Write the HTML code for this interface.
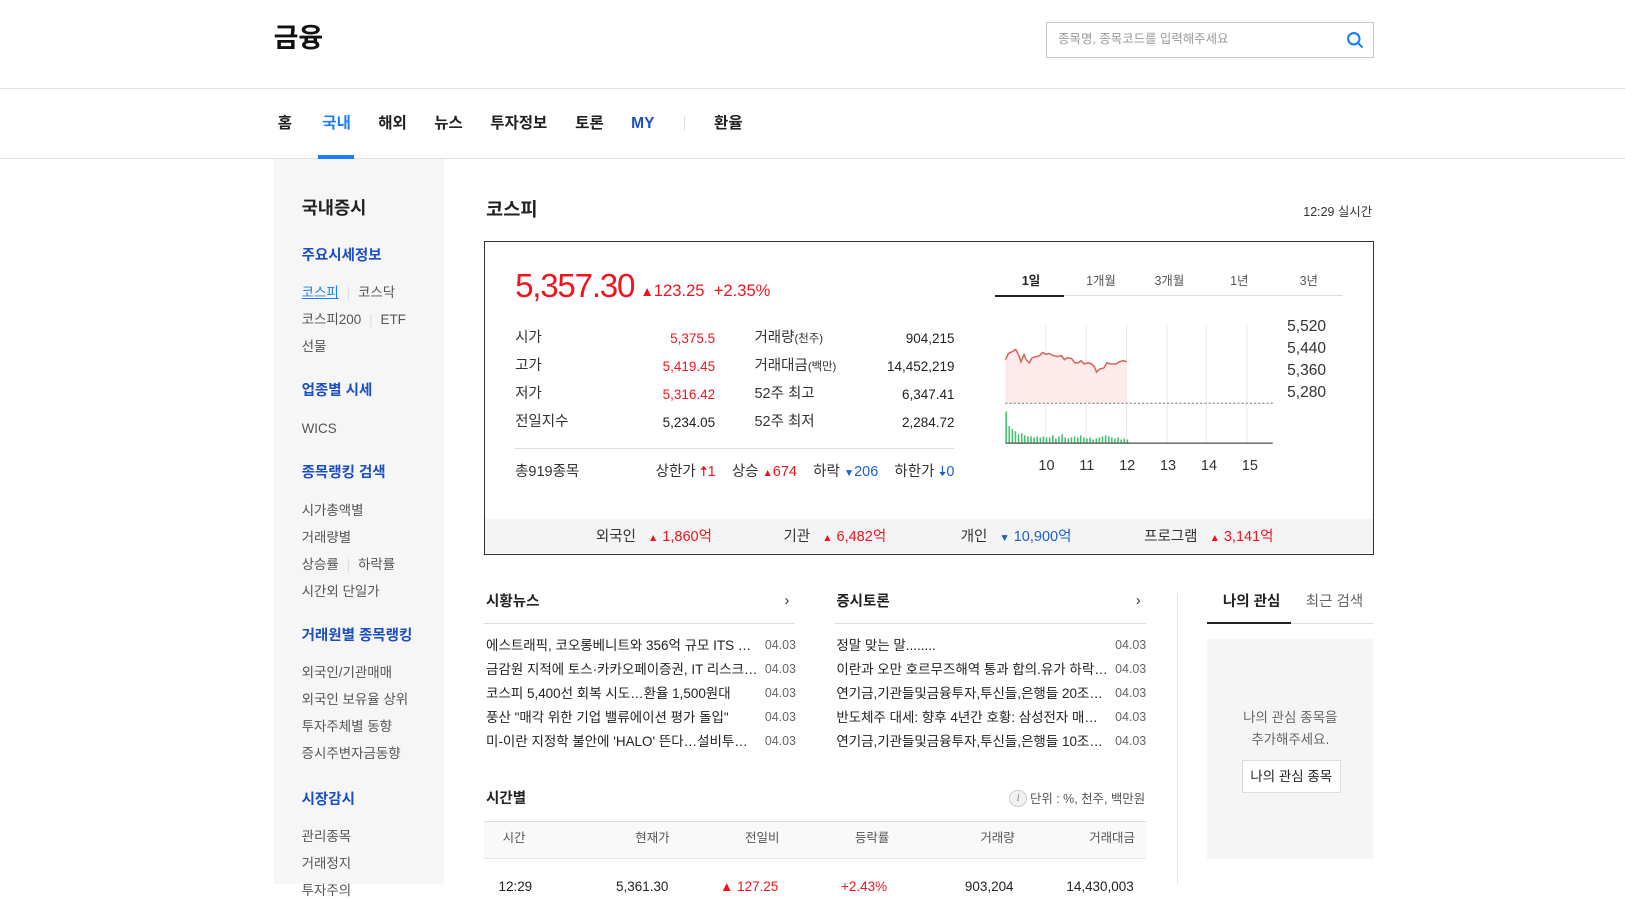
<!DOCTYPE html>
<html><head><meta charset="utf-8">
<style>
html{zoom:1.03635}
body{margin:0;width:1568px;height:853px;overflow:hidden;background:#fff;font-family:"Liberation Sans","Noto Sans CJK KR",sans-serif;color:#222;position:relative}
.a{position:absolute;white-space:nowrap;line-height:1}
.sb{font-size:13px;color:#555}
.nv{font-size:15px;font-weight:bold;top:112px}
.l{font-size:14px;color:#333}
.n{font-size:13px;color:#222}
.r{color:#f0141e!important}.b{color:#1a4fc4}
</style></head><body>
<div class="a" style="left:264px;top:24px;font-size:26px;font-weight:bold;color:#111">금융</div>
<div class="a" style="left:1009px;top:21px;width:315px;height:33px;border:1px solid #c8c8c8"></div>
<div class="a" style="left:1021px;top:32px;font-size:12px;color:#999">종목명, 종목코드를 입력해주세요</div>
<svg class="a" style="left:1299px;top:30px" width="18" height="18" viewBox="0 0 18 18"><circle cx="7.5" cy="7.5" r="5.5" fill="none" stroke="#1a7cff" stroke-width="2"/><path d="M11.5 11.5L16 16" stroke="#1a7cff" stroke-width="2"/></svg>
<div class="a" style="left:0;top:85px;width:1568px;height:1px;background:#e2e2e2"></div>
<div class="a nv" style="left:268px">홈</div>
<div class="a nv" style="left:311px;color:#1a7cff">국내</div>
<div class="a nv" style="left:365px">해외</div>
<div class="a nv" style="left:419px">뉴스</div>
<div class="a nv" style="left:473px">투자정보</div>
<div class="a nv" style="left:555px">토론</div>
<div class="a nv" style="left:609px;color:#1f4fc4">MY</div>
<div class="a" style="left:660px;top:112px;width:1px;height:14px;background:#ddd"></div>
<div class="a nv" style="left:689px">환율</div>
<div class="a" style="left:0;top:152px;width:1568px;height:1px;background:#e2e2e2"></div>
<div class="a" style="left:307px;top:150px;width:35px;height:3px;background:#1a7cff"></div>
<div class="a" style="left:264px;top:153px;width:164px;height:700px;background:#f6f6f6"></div>
<div class="a" style="left:291px;top:193px;font-size:17px;font-weight:bold;color:#222">국내증시</div>
<div class="a b" style="left:291px;top:240px;font-size:14px;font-weight:bold">주요시세정보</div>
<div class="a sb" style="left:291px;top:276px"><span style="color:#1a7cff;text-decoration:underline">코스피</span> <span style="color:#ddd;margin:0 4px">|</span> 코스닥</div>
<div class="a sb" style="left:291px;top:302px">코스피200 <span style="color:#ddd;margin:0 4px">|</span> ETF</div>
<div class="a sb" style="left:291px;top:328px">선물</div>
<div class="a b" style="left:291px;top:371px;font-size:14px;font-weight:bold">업종별 시세</div>
<div class="a sb" style="left:291px;top:407px">WICS</div>
<div class="a b" style="left:291px;top:450px;font-size:14px;font-weight:bold">종목랭킹 검색</div>
<div class="a sb" style="left:291px;top:486px">시가총액별</div>
<div class="a sb" style="left:291px;top:512px">거래량별</div>
<div class="a sb" style="left:291px;top:538px">상승률 <span style="color:#ddd;margin:0 4px">|</span> 하락률</div>
<div class="a sb" style="left:291px;top:564px">시간외 단일가</div>
<div class="a b" style="left:291px;top:607px;font-size:14px;font-weight:bold">거래원별 종목랭킹</div>
<div class="a sb" style="left:291px;top:643px">외국인/기관매매</div>
<div class="a sb" style="left:291px;top:669px">외국인 보유율 상위</div>
<div class="a sb" style="left:291px;top:695px">투자주체별 동향</div>
<div class="a sb" style="left:291px;top:721px">증시주변자금동향</div>
<div class="a b" style="left:291px;top:765px;font-size:14px;font-weight:bold">시장감시</div>
<div class="a sb" style="left:291px;top:801px">관리종목</div>
<div class="a sb" style="left:291px;top:827px">거래정지</div>
<div class="a sb" style="left:291px;top:853px">투자주의</div>

<div class="a" style="left:469px;top:194px;font-size:18px;font-weight:bold">코스피</div>
<div class="a" style="right:244px;top:199px;font-size:12px;color:#333">12:29 실시간</div>
<div class="a" style="left:467px;top:233px;width:857px;height:301px;border:1px solid #333"></div>
<div class="a" style="left:468px;top:501px;width:857px;height:33px;background:#f4f4f4"></div>
<div class="a r" style="left:497px;top:261px;font-size:32px;letter-spacing:-1.2px">5,357.30</div>
<div class="a r" style="left:618px;top:273px;font-size:16px"><span style="font-size:13px">▲</span>123.25 &nbsp;+2.35%</div>
<div class="a l" style="left:497px;top:319px">시가</div><div class="a n r" style="right:878px;top:320px">5,375.5</div>
<div class="a l" style="left:497px;top:346px">고가</div><div class="a n r" style="right:878px;top:347px">5,419.45</div>
<div class="a l" style="left:497px;top:373px">저가</div><div class="a n r" style="right:878px;top:374px">5,316.42</div>
<div class="a l" style="left:497px;top:400px">전일지수</div><div class="a n" style="right:878px;top:401px">5,234.05</div>
<div class="a l" style="left:728px;top:319px">거래량<span style="font-size:11px">(천주)</span></div><div class="a n" style="right:647px;top:320px">904,215</div>
<div class="a l" style="left:728px;top:346px">거래대금<span style="font-size:11px">(백만)</span></div><div class="a n" style="right:647px;top:347px">14,452,219</div>
<div class="a l" style="left:728px;top:373px">52주 최고</div><div class="a n" style="right:647px;top:374px">6,347.41</div>
<div class="a l" style="left:728px;top:400px">52주 최저</div><div class="a n" style="right:647px;top:401px">2,284.72</div>
<div class="a" style="left:497px;top:432px;width:424px;height:1px;background:#ddd"></div>
<div class="a l" style="left:497px;top:449px">총919종목</div>
<div class="a l" style="right:647px;top:449px;font-size:14px">상한가 <span class="r">🠅1</span> &nbsp;&nbsp; 상승 <span class="r"><span style="font-size:10px">▲</span>674</span> &nbsp;&nbsp; 하락 <span style="color:#1a5fd0"><span style="font-size:10px">▼</span>206</span> &nbsp;&nbsp; 하한가 <span style="color:#1a5fd0">🠇0</span></div>
<div class="a l" style="left:575px;top:511px">외국인 &nbsp; <span class="r"><span style="font-size:10px">▲</span> 1,860억</span></div>
<div class="a l" style="left:756px;top:511px">기관 &nbsp; <span class="r"><span style="font-size:10px">▲</span> 6,482억</span></div>
<div class="a l" style="left:927px;top:511px">개인 &nbsp; <span style="color:#1a5fd0"><span style="font-size:10px">▼</span> 10,900억</span></div>
<div class="a l" style="left:1104px;top:511px">프로그램 &nbsp; <span class="r"><span style="font-size:10px">▲</span> 3,141억</span></div>

<div class="a" style="left:960px;top:285px;width:336px;height:1px;background:#ddd"></div>
<div class="a" style="left:960px;top:285px;width:67px;height:2px;background:#222"></div>
<div class="a" style="left:986px;top:265px;font-size:12px;font-weight:bold">1일</div>
<div class="a" style="left:1048px;top:265px;font-size:12px;color:#555">1개월</div>
<div class="a" style="left:1114px;top:265px;font-size:12px;color:#555">3개월</div>
<div class="a" style="left:1187px;top:265px;font-size:12px;color:#555">1년</div>
<div class="a" style="left:1254px;top:265px;font-size:12px;color:#555">3년</div>
<svg class="a" style="left:960px;top:300px" width="280" height="140" viewBox="960 300 280 140">
<g stroke="#eaeaea"><line x1="1009" y1="313" x2="1009" y2="427"/><line x1="1048" y1="313" x2="1048" y2="427"/><line x1="1087" y1="313" x2="1087" y2="427"/><line x1="1126" y1="313" x2="1126" y2="427"/><line x1="1164" y1="313" x2="1164" y2="427"/><line x1="1203" y1="313" x2="1203" y2="427"/></g>
<path d="M970 389L970 347 973 341 977 339 980 337 983 343 985 349 988 342 990 347 993 350 996 345 1000 344 1003 343 1006 340 1009 342 1012 341 1016 343 1020 344 1024 343 1027 347 1030 345 1034 346 1037 350 1040 350 1043 348 1046 351 1050 350 1053 351 1056 354 1058 359 1061 356 1065 355 1068 350 1071 351 1074 351 1077 351 1080 349 1084 348 1087 349 1087 389Z" fill="#fdeaea"/>
<polyline points="970,347 973,341 977,339 980,337 983,343 985,349 988,342 990,347 993,350 996,345 1000,344 1003,343 1006,340 1009,342 1012,341 1016,343 1020,344 1024,343 1027,347 1030,345 1034,346 1037,350 1040,350 1043,348 1046,351 1050,350 1053,351 1056,354 1058,359 1061,356 1065,355 1068,350 1071,351 1074,351 1077,351 1080,349 1084,348 1087,349" fill="none" stroke="#d9655e" stroke-width="1.5"/>
<line x1="970" y1="389" x2="1228" y2="389" stroke="#777" stroke-dasharray="2,2"/>
<g fill="#3bc36a"><rect x="970" y="397" width="1.5" height="30"/><rect x="973" y="411" width="1.5" height="16"/><rect x="976" y="414" width="1.5" height="13"/><rect x="979" y="416" width="1.5" height="11"/><rect x="982" y="419" width="1.5" height="8"/><rect x="985" y="418" width="1.5" height="9"/><rect x="988" y="420" width="1.5" height="7"/><rect x="991" y="421" width="1.5" height="6"/><rect x="994" y="421" width="1.5" height="6"/><rect x="997" y="422" width="1.5" height="5"/><rect x="1000" y="421" width="1.5" height="6"/><rect x="1003" y="422" width="1.5" height="5"/><rect x="1006" y="421" width="1.5" height="6"/><rect x="1009" y="422" width="1.5" height="5"/><rect x="1012" y="422" width="1.5" height="5"/><rect x="1015" y="420" width="1.5" height="7"/><rect x="1018" y="423" width="1.5" height="4"/><rect x="1021" y="421" width="1.5" height="6"/><rect x="1024" y="419" width="1.5" height="8"/><rect x="1027" y="422" width="1.5" height="5"/><rect x="1030" y="423" width="1.5" height="4"/><rect x="1033" y="422" width="1.5" height="5"/><rect x="1036" y="421" width="1.5" height="6"/><rect x="1039" y="422" width="1.5" height="5"/><rect x="1042" y="420" width="1.5" height="7"/><rect x="1045" y="422" width="1.5" height="5"/><rect x="1048" y="423" width="1.5" height="4"/><rect x="1051" y="422" width="1.5" height="5"/><rect x="1054" y="424" width="1.5" height="3"/><rect x="1057" y="423" width="1.5" height="4"/><rect x="1060" y="422" width="1.5" height="5"/><rect x="1063" y="421" width="1.5" height="6"/><rect x="1066" y="420" width="1.5" height="7"/><rect x="1069" y="421" width="1.5" height="6"/><rect x="1072" y="422" width="1.5" height="5"/><rect x="1075" y="423" width="1.5" height="4"/><rect x="1078" y="422" width="1.5" height="5"/><rect x="1081" y="424" width="1.5" height="3"/><rect x="1084" y="423" width="1.5" height="4"/><rect x="1087" y="424" width="1.5" height="3"/></g>
<line x1="970" y1="427.5" x2="1228" y2="427.5" stroke="#222"/>
</svg>
<div class="a" style="left:1242px;top:305px;font-size:15px;color:#333;line-height:21.3px">5,520<br>5,440<br>5,360<br>5,280</div>
<div class="a" style="left:1002px;top:443px;font-size:14px;color:#333;word-spacing:20px">10 11 12 13 14 15</div>

<div class="a" style="left:469px;top:574px;font-size:14px;font-weight:bold">시황뉴스</div>
<div class="a" style="left:757px;top:573px;font-size:14px;color:#333">›</div>
<div class="a" style="left:467px;top:601px;width:300px;height:1px;background:#ddd"></div>
<div class="a" style="left:807px;top:574px;font-size:14px;font-weight:bold">증시토론</div>
<div class="a" style="left:1096px;top:573px;font-size:14px;color:#333">›</div>
<div class="a" style="left:806px;top:601px;width:300px;height:1px;background:#ddd"></div>
<div class="a" style="left:469px;top:612px;font-size:13px;line-height:23px;color:#222">에스트래픽, 코오롱베니트와 356억 규모 ITS …<br>금감원 지적에 토스·카카오페이증권, IT 리스크…<br>코스피 5,400선 회복 시도…환율 1,500원대<br>풍산 "매각 위한 기업 밸류에이션 평가 돌입"<br>미-이란 지정학 불안에 'HALO' 뜬다…설비투…</div>
<div class="a" style="left:738px;top:612px;font-size:12px;line-height:23px;color:#666">04.03<br>04.03<br>04.03<br>04.03<br>04.03</div>
<div class="a" style="left:807px;top:612px;font-size:13px;line-height:23px;color:#222">정말 맞는 말........<br>이란과 오만 호르무즈해역 통과 합의.유가 하락…<br>연기금,기관들및금융투자,투신들,은행들 20조…<br>반도체주 대세: 향후 4년간 호황: 삼성전자 매…<br>연기금,기관들및금융투자,투신들,은행들 10조…</div>
<div class="a" style="left:1076px;top:612px;font-size:12px;line-height:23px;color:#666">04.03<br>04.03<br>04.03<br>04.03<br>04.03</div>
<div class="a" style="left:1136px;top:572px;width:1px;height:281px;background:#e2e2e2"></div>
<div class="a" style="left:1180px;top:574px;font-size:14px;font-weight:bold">나의 관심</div>
<div class="a" style="left:1260px;top:574px;font-size:14px;color:#666">최근 검색</div>
<div class="a" style="left:1165px;top:601px;width:160px;height:1px;background:#ddd"></div>
<div class="a" style="left:1165px;top:600px;width:81px;height:2px;background:#222"></div>
<div class="a" style="left:1165px;top:617px;width:160px;height:212px;background:#f5f5f5"></div>
<div class="a" style="left:1165px;top:682px;width:160px;text-align:center;font-size:13px;line-height:21px;color:#666;white-space:normal">나의 관심 종목을<br>추가해주세요.</div>
<div class="a" style="left:1198px;top:733px;width:94px;height:30px;background:#fff;border:1px solid #ddd;font-size:13px;line-height:30px;text-align:center;color:#222">나의 관심 종목</div>

<div class="a" style="left:469px;top:764px;font-size:14px;font-weight:bold">시간별</div>
<div class="a" style="left:974px;top:762px;width:15px;height:15px;border:1px solid #ccc;border-radius:50%;background:#f2f2f2;font:italic 11px 'Liberation Serif',serif;line-height:15px;text-align:center;color:#888">i</div>
<div class="a" style="right:463px;top:765px;font-size:12px;color:#555">단위 : %, 천주, 백만원</div>
<div class="a" style="left:467px;top:792px;width:639px;height:35px;background:#f9f9f9;border-top:1px solid #ddd;border-bottom:1px solid #e5e5e5"></div>
<div class="a" style="left:485px;top:803px;font-size:12px;color:#555">시간</div>
<div class="a" style="left:613px;top:803px;font-size:12px;color:#555">현재가</div>
<div class="a" style="left:719px;top:803px;font-size:12px;color:#555">전일비</div>
<div class="a" style="left:825px;top:803px;font-size:12px;color:#555">등락률</div>
<div class="a" style="left:946px;top:803px;font-size:12px;color:#555">거래량</div>
<div class="a" style="left:1051px;top:803px;font-size:12px;color:#555">거래대금</div>
<div class="a" style="left:481px;top:849px;font-size:13px">12:29</div>
<div class="a" style="right:923px;top:849px;font-size:13px">5,361.30</div>
<div class="a r" style="right:817px;top:849px;font-size:13px">▲ 127.25</div>
<div class="a r" style="right:712px;top:849px;font-size:13px">+2.43%</div>
<div class="a" style="right:590px;top:849px;font-size:13px">903,204</div>
<div class="a" style="right:474px;top:849px;font-size:13px">14,430,003</div>
</body></html>
